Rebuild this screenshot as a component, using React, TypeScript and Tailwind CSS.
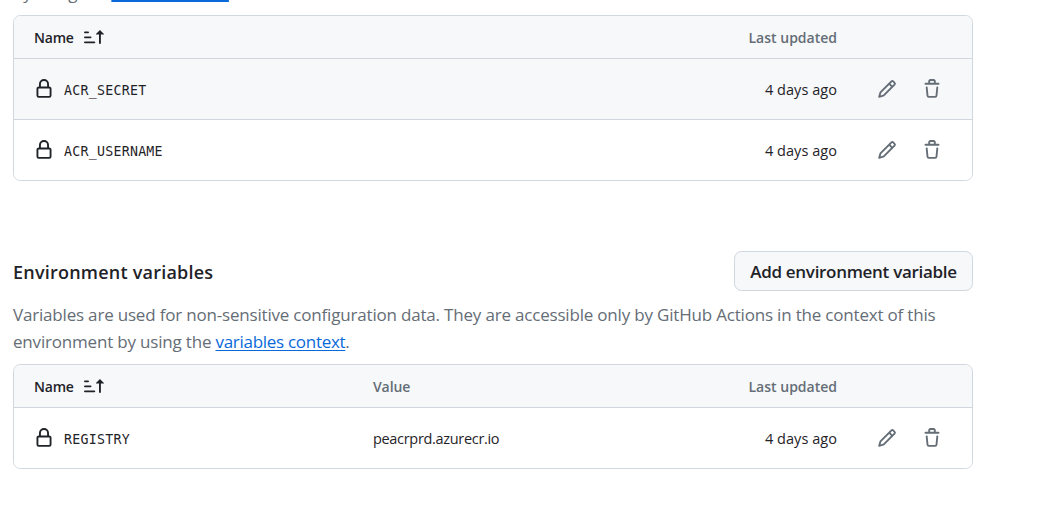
import type { ReactNode } from 'react';

const LOCK =
  'M4 4a4 4 0 0 1 8 0v2h.25c.966 0 1.75.784 1.75 1.75v5.5A1.75 1.75 0 0 1 12.25 15h-8.5A1.75 1.75 0 0 1 2 13.25v-5.5C2 6.784 2.784 6 3.75 6H4Zm8.25 3.5h-8.5a.25.25 0 0 0-.25.25v5.5c0 .138.112.25.25.25h8.5a.25.25 0 0 0 .25-.25v-5.5a.25.25 0 0 0-.25-.25ZM10.5 6V4a2.5 2.5 0 1 0-5 0v2Z';
const PENCIL =
  'M11.013 1.427a1.75 1.75 0 0 1 2.474 0l1.086 1.086a1.75 1.75 0 0 1 0 2.474l-8.61 8.61c-.21.21-.47.364-.756.445l-3.251.93a.75.75 0 0 1-.927-.928l.929-3.25c.081-.286.235-.547.445-.758l8.61-8.61Zm.176 4.823L9.75 4.81l-6.286 6.287a.253.253 0 0 0-.064.108l-.558 1.953 1.953-.558a.253.253 0 0 0 .108-.064Zm1.238-3.763a.25.25 0 0 0-.354 0L10.811 3.75l1.439 1.44 1.263-1.263a.25.25 0 0 0 0-.354Z';
const TRASH =
  'M11 1.75V3h2.25a.75.75 0 0 1 0 1.5H2.75a.75.75 0 0 1 0-1.5H5V1.75C5 .784 5.784 0 6.75 0h2.5C10.216 0 11 .784 11 1.75ZM4.496 6.675l.66 6.6a.25.25 0 0 0 .249.225h5.19a.25.25 0 0 0 .249-.225l.66-6.6a.75.75 0 0 1 1.492.149l-.66 6.6A1.748 1.748 0 0 1 10.595 15h-5.19a1.75 1.75 0 0 1-1.741-1.575l-.66-6.6a.75.75 0 1 1 1.492-.15ZM6.5 1.75V3h3V1.75a.25.25 0 0 0-.25-.25h-2.5a.25.25 0 0 0-.25.25Z';
const SORT =
  'm12.927 2.573 3 3A.25.25 0 0 1 15.75 6H13.5v6.75a.75.75 0 0 1-1.5 0V6H9.75a.25.25 0 0 1-.177-.427l3-3a.25.25 0 0 1 .354 0ZM0 12.25a.75.75 0 0 1 .75-.75h7.5a.75.75 0 0 1 0 1.5H.75a.75.75 0 0 1-.75-.75Zm0-4a.75.75 0 0 1 .75-.75h4.5a.75.75 0 0 1 0 1.5H.75A.75.75 0 0 1 0 8.25Zm0-4a.75.75 0 0 1 .75-.75h2.5a.75.75 0 0 1 0 1.5H.75A.75.75 0 0 1 0 4.25Z';

function Icon({ d }: { d: string }) {
  return (
    <svg viewBox="0 0 16 16" className="size-5 shrink-0 fill-current" aria-hidden="true">
      <path d={d} />
    </svg>
  );
}

function Table({ showValue, children }: { showValue?: boolean; children: ReactNode }) {
  return (
    <div className="overflow-hidden rounded-[7.5px] border border-[#d0d7de]">
      <div className="flex h-[42px] items-center bg-[#f6f8fa] pl-5 text-[14px] font-semibold text-[#656d76]">
        <div className="flex w-[339px] items-center text-[#1f2328]">
          <span className="w-[50px] whitespace-nowrap tracking-[-0.2px]">Name</span>
          <Icon d={SORT} />
        </div>
        <div className="w-[250px]">{showValue && <span className="tracking-[-0.1px]">Value</span>}</div>
        <div className="w-[214px] text-right whitespace-nowrap">Last updated</div>
      </div>
      {children}
    </div>
  );
}

function Row({ name, value, highlighted }: { name: string; value?: string; highlighted?: boolean }) {
  return (
    <div
      className={`flex h-[61px] items-center border-t border-[#d0d7de] pl-5 text-[14.5px] text-[#1f2328] ${
        highlighted ? 'bg-[#f6f8fa]' : 'bg-white'
      }`}
    >
      <div className="flex w-[339px] items-center gap-[10px]">
        <Icon d={LOCK} />
        <span className="pt-[3px] font-['DejaVu_Sans_Mono',monospace] text-[13.25px] tracking-[0.26px]">{name}</span>
      </div>
      <div className="w-[250px] pt-[2px] tracking-[-0.32px]">{value}</div>
      <div className="w-[214px] pt-[2px] text-right tracking-[0.05px]">4 days ago</div>
      <div className="ml-10 flex gap-[25px] text-[#656d76]">
        <button type="button" aria-label="Edit">
          <Icon d={PENCIL} />
        </button>
        <button type="button" aria-label="Delete">
          <Icon d={TRASH} />
        </button>
      </div>
    </div>
  );
}

export default function App() {
  return (
    <div className="h-[517px] w-[1041px] overflow-hidden bg-white pl-[13px] font-['Open_Sans',sans-serif] text-[#1f2328]">
      <main className="w-[960px]">
        <div className="flex h-[15px] items-end">
          <p className="pb-[9px] text-[17px] leading-[27px] tracking-[-0.18px] text-[#656d76]">
            by using the{' '}
            <a className="text-[#0969da] underline decoration-[#0969da] decoration-2 underline-offset-1">secrets context</a>.
          </p>
        </div>
        <Table>
          <Row name="ACR_SECRET" highlighted />
          <Row name="ACR_USERNAME" />
        </Table>
        <section className="pt-[70px]">
          <div className="flex h-10 items-center justify-between">
            <h2 className="pt-[2px] text-[18px] font-semibold tracking-[0.22px]">Environment variables</h2>
            <button
              type="button"
              className="h-10 w-[239px] rounded-[7.5px] border border-[#d0d7de] bg-[#f6f8fa] pt-[2px] text-[17px] font-semibold whitespace-nowrap tracking-[-0.3px]"
            >
              Add environment variable
            </button>
          </div>
          <p className="pt-[10px] pb-[9px] text-[17px] leading-[27px] tracking-[-0.19px] whitespace-nowrap text-[#656d76]">
            <span>Variables are used for non-sensitive configuration data. They are accessible only by GitHub Actions in the context of this</span>
            <br />
            environment by using the{' '}
            <a className="tracking-[-0.29px] text-[#0969da] underline decoration-1 underline-offset-2">variables context</a>.
          </p>
          <Table showValue>
            <Row name="REGISTRY" value="peacrprd.azurecr.io" />
          </Table>
        </section>
      </main>
    </div>
  );
}
